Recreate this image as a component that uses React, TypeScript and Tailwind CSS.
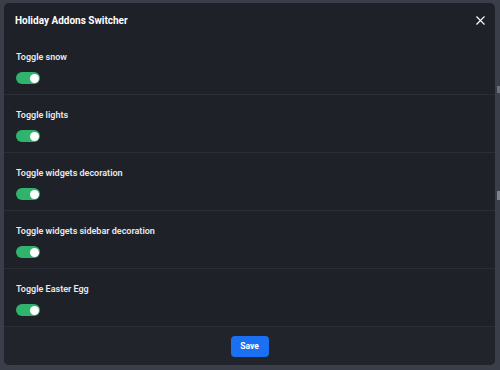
import { useState } from 'react';

const addons = [
  { id: 'snow', label: 'Toggle snow' },
  { id: 'lights', label: 'Toggle lights' },
  { id: 'widgets', label: 'Toggle widgets decoration' },
  { id: 'sidebar', label: 'Toggle widgets sidebar decoration' },
  { id: 'easter', label: 'Toggle Easter Egg' },
];

function Toggle({ on, onChange }: { on: boolean; onChange: () => void }) {
  return (
    <button
      onClick={onChange}
      className={`relative w-[24px] h-[12px] rounded-full transition-colors ${on ? 'bg-[#2fb36d]' : 'bg-[#4b4f5a]'}`}
    >
      <span
        className={`absolute top-[1.5px] w-[9px] h-[9px] rounded-full bg-white transition-all ${on ? 'left-[13.5px]' : 'left-[1.5px]'}`}
      />
    </button>
  );
}

export default function App() {
  const [state, setState] = useState<Record<string, boolean>>({
    snow: true,
    lights: true,
    widgets: true,
    sidebar: true,
    easter: true,
  });

  return (
    <div className="w-[500px] h-[370px] bg-[#3a3e48] pt-[3px] pl-[4px] font-['Roboto','Liberation_Sans',sans-serif] overflow-hidden relative">
      {/* bits of the page peeking out on the right */}
      <div className="absolute left-[497px] top-[86px] w-[3px] h-[7px] bg-[#6b707b]" />
      <div className="absolute left-[497px] top-[191px] w-[3px] h-[9px] bg-[#7d828c]" />

      <div className="w-[491px] h-[362px] bg-[#1f2129] rounded-[5px] flex flex-col overflow-hidden">
        {/* Header */}
        <div className="h-[34px] flex items-center justify-between pl-[11px] pr-[10px]">
          <h2 className="text-[10px] font-bold text-white">Holiday Addons Switcher</h2>
          <button className="text-white">
            <svg width="9" height="9" viewBox="0 0 10 10" fill="none" stroke="currentColor" strokeWidth="1.4" strokeLinecap="square">
              <path d="M1 1L9 9M9 1L1 9" />
            </svg>
          </button>
        </div>

        {/* Rows */}
        <div className="flex flex-col">
          {addons.map((a) => (
            <div key={a.id} className="pl-[12px] pt-3 pb-[10px] border-b border-[#2b2e37]">
              <p className="text-[9px] leading-4 font-semibold text-[#e8e9ec]">{a.label}</p>
              <div className="mt-[7px] h-3 flex">
                <Toggle
                  on={state[a.id]}
                  onChange={() => setState({ ...state, [a.id]: !state[a.id] })}
                />
              </div>
            </div>
          ))}
        </div>

        {/* Footer */}
        <div className="flex-1 bg-[#22242c] flex items-center justify-center">
          <button className="w-[38px] h-[21px] rounded-[4px] bg-[#1b6ff2] text-white text-[8.5px] font-bold">
            Save
          </button>
        </div>
      </div>
    </div>
  );
}
